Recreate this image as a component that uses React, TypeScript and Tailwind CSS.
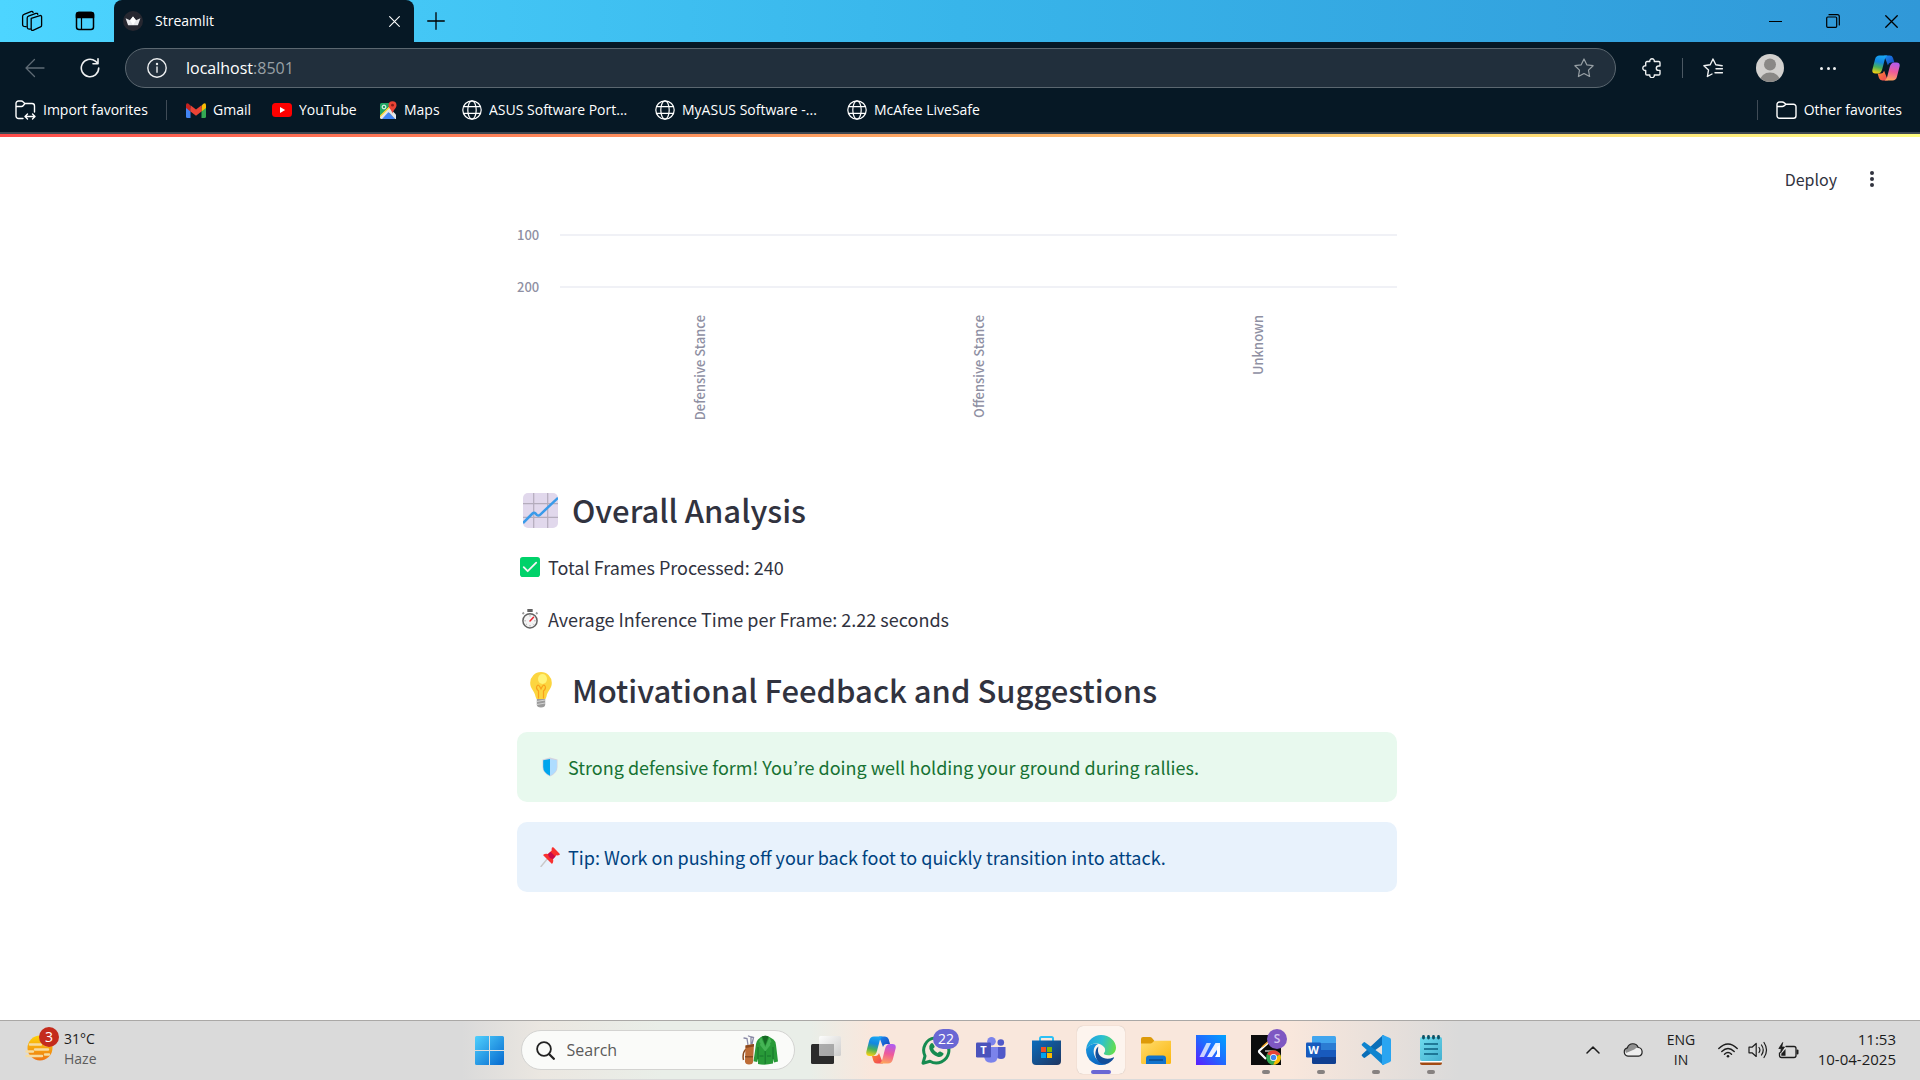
import type { ReactNode } from "react";

type IconProps = { className?: string };

const UI = "font-['Open_Sans',sans-serif]";

/* ---------- Browser chrome icons ---------- */

const line = { fill: "none", stroke: "currentColor", strokeLinecap: "round", strokeLinejoin: "round" } as const;

function WorkspacesIcon() {
  return (
    <svg viewBox="0 0 22 22" className="size-[22px]" {...line} strokeWidth="1.300">
      <path d="M10.2 8.400 19 5.600q1.600-.4 1.600 1.200v8.400q0 1.200-1.100 1.700L12 20.300q-1.800.6-1.800-1.200z" />
      <path d="M9.300 19Q6.200 19.500 6.200 17V8q0-1.400 1.300-1.900L14.800 3.400q1.800-.5 2 1" />
      <path d="M5.200 16.600Q1.600 17 1.600 14.500V6.200Q1.600 4.800 3 4.300L9.900 1.600q1.700-.5 2.200.8" />
    </svg>
  );
}

function TabActionsIcon() {
  return (
    <svg viewBox="0 0 20 20" className="size-5" {...line} strokeWidth="1.500">
      <rect x="1.500" y="1.500" width="17" height="17" rx="2.500" />
      <path d="M1.500 3.500q0-2 2-2h13q2 0 2 2v3h-17z" fill="currentColor" />
      <path d="M6.500 6v12" strokeWidth="1.200" />
    </svg>
  );
}

function CrownIcon() {
  return (
    <svg viewBox="0 0 20 20" className="size-5">
      <circle cx="10" cy="10" r="10" fill="#262730" />
      <path d="M2.600 7.200 7 9.300 10 5.500l3 3.800 4.400-2.100-2.300 6.600q-.2.500-.8.500H5.700q-.6 0-.8-.5z" fill="#e9e9ec" />
      <path d="M10 5.500 13 9.300 10 14.300 7 9.300z" fill="#fff" />
    </svg>
  );
}

function CloseIcon({ className = "size-3" }: IconProps) {
  return (
    <svg viewBox="0 0 12 12" className={className} {...line} strokeWidth="1.200">
      <path d="M.7.7l10.600 10.600M11.300.7.7 11.300" />
    </svg>
  );
}

function PlusIcon() {
  return (
    <svg viewBox="0 0 18 18" className="size-[18px]" {...line} strokeWidth="1.300">
      <path d="M9 .7v16.600M.7 9h16.600" />
    </svg>
  );
}

function BackIcon() {
  return (
    <svg viewBox="0 0 20 20" className="size-5" {...line} strokeWidth="1.300">
      <path d="M19 10H1.200M9.500 1.500 1 10l8.500 8.500" />
    </svg>
  );
}

function RefreshIcon() {
  return (
    <svg viewBox="0 0 20 20" className="size-5" {...line} strokeWidth="1.600">
      <path d="M18.700 10A8.700 8.700 0 1 1 15.400 3.200L18 5.500M18 .8v4.900h-5" />
    </svg>
  );
}

function InfoIcon() {
  return (
    <svg viewBox="0 0 20 20" className="size-5" {...line} strokeWidth="1.400">
      <circle cx="10" cy="10" r="9.200" />
      <path d="M10 9v5.200" />
      <circle cx="10" cy="6" r=".5" fill="currentColor" />
    </svg>
  );
}

function StarIcon() {
  return (
    <svg viewBox="0 0 20 20" className="size-5" {...line} strokeWidth="1.200">
      <path d="M10 1l2.800 5.800 6.300.9-4.600 4.400 1.100 6.400L10 15.500l-5.600 3 1.100-6.400L.9 7.700l6.300-.9z" />
    </svg>
  );
}

function PuzzleIcon() {
  return (
    <svg viewBox="0 0 20 20" className="size-5" {...line} strokeWidth="1.400">
      <path d="M5 3.500h2.800a2.300 2.300 0 1 1 4.500 0h4.400a1.300 1.300 0 0 1 1.300 1.300V8h-1.500a2.200 2.200 0 0 0 0 4.400H18v3.300a1.300 1.300 0 0 1-1.300 1.300h-4.400a2.300 2.300 0 1 1-4.500 0H5a1.300 1.300 0 0 1-1.300-1.300v-3.200a2.400 2.400 0 1 1 0-4.700v-3A1.300 1.300 0 0 1 5 3.500z" />
    </svg>
  );
}

function FavoritesIcon() {
  return (
    <svg viewBox="0 0 20 20" className="size-5" {...line} strokeWidth="1.400">
      <path d="M19.200 7.700l-6.400-.9L10 1 7.200 6.800.9 7.700l4.600 4.400-1.100 6.400L9 16M13 10.800h6.500M12 14.800h7.500" />
    </svg>
  );
}

function AvatarIcon() {
  return (
    <svg viewBox="0 0 28 28" className="size-7">
      <defs>
        <clipPath id="avatar-clip">
          <circle cx="14" cy="14" r="14" />
        </clipPath>
      </defs>
      <g clipPath="url(#avatar-clip)">
        <rect width="28" height="28" fill="#d2d0ce" />
        <circle cx="14" cy="10.500" r="6" fill="#8a8886" />
        <ellipse cx="14" cy="27" rx="10" ry="8.500" fill="#8a8886" />
      </g>
    </svg>
  );
}

function CopilotIcon({ className }: IconProps) {
  return (
    <svg viewBox="0 0 30 28" className={className}>
      <defs>
        <linearGradient id="cp-a" x1=".5" y1="0" x2=".3" y2="1">
          <stop offset="0" stopColor="#18a5f3" />
          <stop offset=".35" stopColor="#1387e0" />
          <stop offset=".65" stopColor="#48b05c" />
          <stop offset="1" stopColor="#f8d110" />
        </linearGradient>
        <linearGradient id="cp-b" x1=".6" y1="0" x2=".4" y2="1">
          <stop offset="0" stopColor="#b05cf0" />
          <stop offset=".5" stopColor="#ef5a9a" />
          <stop offset="1" stopColor="#fda45c" />
        </linearGradient>
        <linearGradient id="cp-c" x1="0" y1="0" x2="1" y2="1">
          <stop offset="0" stopColor="#1b8df2" />
          <stop offset="1" stopColor="#1440b8" />
        </linearGradient>
        <linearGradient id="cp-d" x1="0" y1="0" x2="1" y2="1">
          <stop offset="0" stopColor="#ff8a2e" />
          <stop offset="1" stopColor="#ee3f5c" />
        </linearGradient>
      </defs>
      <path d="M13 .5h6q2.700 0 3.600 2.600L24 8h-3.500q-2.500 0-3.500 3z" fill="url(#cp-c)" />
      <path d="M17 27.500h-6q-2.700 0-3.600-2.600L6 20h3.500q2.500 0 3.500-3z" fill="url(#cp-d)" />
      <path d="M8 .5h8.500q-2 1-2.800 4L11 15q-1.200 5-5 5H3.500Q-.5 20 .4 15.500l2.800-11Q4.300.5 8 .5z" fill="url(#cp-a)" />
      <path d="M22 27.500h-8.500q2-1 2.800-4L19 13q1.200-5 5-5h2.500q4 0 3.100 4.500l-2.800 11q-1.100 4-4.800 4z" fill="url(#cp-b)" />
    </svg>
  );
}

function ImportFolderIcon() {
  return (
    <svg viewBox="0 0 21 21" className="size-[21px]" {...line} strokeWidth="1.400">
      <path d="M8 18.500H3.500A2.500 2.500 0 0 1 1 16V3.500A2.500 2.500 0 0 1 3.500 1h2.800q1 0 1.700.8L9.800 3.500H17A2.500 2.500 0 0 1 19.500 6v6M1.500 6.500h5q1 0 1.600-.7l1.700-2" />
      <path d="M10.500 16.500h9M12.500 14l-2.500 2.500 2.500 2.500M17.500 14l2.500 2.500-2.500 2.500" />
    </svg>
  );
}

function FolderIcon() {
  return (
    <svg viewBox="0 0 21 18" className="h-[18px] w-[21px]" {...line} strokeWidth="1.400">
      <path d="M1 3.500A2.500 2.500 0 0 1 3.500 1h2.800q1 0 1.700.6l2 1.600h7.500A2.500 2.500 0 0 1 20 5.700v9a2.500 2.500 0 0 1-2.500 2.500h-14A2.500 2.500 0 0 1 1 14.700zM1.200 5.500h5.100q1 0 1.700-.6L10 3.300" />
    </svg>
  );
}

function GmailIcon() {
  return (
    <svg viewBox="0 0 20 15" className="h-[15px] w-5">
      <path d="M0 2v11.500Q0 15 1.400 15h3.100V5.300z" fill="#4285f4" />
      <path d="M20 2v11.500q0 1.500-1.400 1.500h-3.100V5.300z" fill="#34a853" />
      <path d="M0 2.200V5l4.500 3.500V3L3 1Q0-.8 0 2.200z" fill="#c5221f" />
      <path d="M20 2.200V5l-4.500 3.500V3L17 1q3-1.800 3 1.200z" fill="#fbbc04" />
      <path d="M4.500 2.300 10 6.500l5.500-4.200v6.200L10 12.700 4.500 8.500z" fill="#ea4335" />
    </svg>
  );
}

function YouTubeIcon() {
  return (
    <svg viewBox="0 0 20 14" className="h-[14px] w-5">
      <rect width="20" height="14" rx="3.500" fill="#f00" />
      <path d="M8 4v6l5.200-3z" fill="#fff" />
    </svg>
  );
}

function MapsIcon() {
  return (
    <svg viewBox="0 0 18 19" className="h-[19px] w-[18px]">
      <path d="M1.500 2H13L1 15V3.500Q1 2 2.500 2z" fill="#1fa463" />
      <path d="M1 15 11 5l3 3L4 18H2.500Q1 18 1 16.500z" fill="#e6e6e6" />
      <path d="M3 18 9.500 11l7 7z" fill="#4285f4" />
      <path d="M9.500 11 12 8.500l5 5v4.500h-.8z" fill="#e6e6e6" />
      <path d="M1 14.500 11.500 4l1 1L1 16.500z" fill="#fdd835" />
      <circle cx="5" cy="6" r="1.900" fill="none" stroke="#fff" />
      <path d="M13.500.2a4 4 0 0 1 4 4c0 3-3.200 4.300-4 8.300-.8-4-4-5.300-4-8.300a4 4 0 0 1 4-4z" fill="#ea4335" />
      <circle cx="13.500" cy="4.200" r="1.400" fill="#8c1d18" />
    </svg>
  );
}

function GlobeIcon() {
  return (
    <svg viewBox="0 0 20 20" className="size-5" {...line} strokeWidth="1.200">
      <circle cx="10" cy="10" r="9.200" />
      <ellipse cx="10" cy="10" rx="4.200" ry="9.200" />
      <path d="M1.600 6.600h16.800M1.600 13.400h16.800" />
    </svg>
  );
}

/* ---------- Page icons ---------- */

function ChartEmoji() {
  return (
    <svg viewBox="0 0 35 35" className="size-[35px]" role="img" aria-label="Chart">
      <rect width="35" height="35" rx="5" fill="#e1d8ec" />
      <path d="M10.700 0v35M24.700 0v35M0 10.700h35M0 24.300h35" stroke="#b4acbc" strokeWidth="1.200" />
      <path d="M0 30 9.500 20.500q1.500-1.500 3 0l1.300 1.300q1.600 1.500 3.200 0L35 4.800" fill="none" stroke="#3a9bea" strokeWidth="2.500" />
    </svg>
  );
}

function BulbEmoji() {
  return (
    <svg viewBox="0 0 22 36" className="h-9 w-[22px]" role="img" aria-label="Light bulb">
      <path d="M6.800 26h8.400v6.500q0 3-4.200 3t-4.200-3z" fill="#9b9b9b" />
      <path d="M6.800 29.500l8.400-1.500M6.800 32.500l8.400-1.500" stroke="#d3d3d3" strokeWidth="1" />
      <path d="M11 0a10.800 10.800 0 0 1 10.800 11c0 5.500-4.300 8-5.300 13.500q-.4 2.500-2 2.500h-7q-1.600 0-2-2.500C4.500 19 .2 16.500.2 11A10.800 10.800 0 0 1 11 0z" fill="#fcd53f" />
      <path d="M8.500 26.500V19q-3-3-1.500-5t3 1l1 2 1-2q1.500-3 3-1t-1.500 5v7.500" fill="none" stroke="#f9a11c" strokeWidth="1.200" />
      <ellipse cx="12.500" cy="7" rx="4.500" ry="5" fill="#fff478" />
    </svg>
  );
}

function CheckEmoji() {
  return (
    <svg viewBox="0 0 20 20" className="size-5" role="img" aria-label="Done">
      <rect width="20" height="20" rx="2.800" fill="#00d26a" />
      <path d="M3.700 10.200l4 4L16.200 5.700" fill="none" stroke="#f4f4f4" strokeWidth="1.800" strokeLinecap="round" strokeLinejoin="round" />
    </svg>
  );
}

function StopwatchEmoji() {
  return (
    <svg viewBox="0 0 18 20" className="h-5 w-[18px]" role="img" aria-label="Stopwatch">
      <rect x="6.300" y="0" width="5.400" height="3" rx=".6" fill="#636363" />
      <path d="M1.500 5 3 3.500M16.500 5 15 3.500" stroke="#9b9b9b" strokeWidth="1.800" />
      <circle cx="9" cy="11.800" r="7.100" fill="#f4f4f4" stroke="#636363" strokeWidth="1.500" />
      <path d="M9 6.200v1.300M9 16v1.400M3.500 11.800h1.300M13.200 11.800h1.300M5.200 15.600l.8-.8M12.800 15.600l-.8-.8" stroke="#9b9b9b" strokeWidth=".9" />
      <path d="M9 12l3.500-3.700" stroke="#e8242f" strokeWidth="1.500" strokeLinecap="round" />
    </svg>
  );
}

function ShieldEmoji() {
  return (
    <svg viewBox="0 0 16 20" className="h-5 w-4" role="img" aria-label="Shield">
      <path d="M8 .5 15.500 2.500V10q0 6-7.500 9.500Q.5 16 .5 10V2.500z" fill="#d3d3e0" />
      <path d="M8 2 1.200 3.200V10Q1.200 15.500 8 18.800z" fill="#00a6ed" />
      <path d="M8 2l6.800 1.200V10q0 5.500-6.800 8.800z" fill="#aeddff" />
    </svg>
  );
}

function PinEmoji() {
  return (
    <svg viewBox="0 0 20 20" className="size-5" role="img" aria-label="Pushpin">
      <path d="M1 19.500 8 11" stroke="#c9c9c9" strokeWidth="1.400" strokeLinecap="round" />
      <path d="M12 .6q.8-.8 1.600 0l5.800 5.800q.8.800 0 1.600-1.500.6-3 .3L13 12q.9 2.800-1 5L3 8q2.200-1.900 5-1l3.700-3.500Q11.400 2 12 .6z" fill="#f8312f" />
      <path d="M8 7l2.500-2.300 5 4.800L13 12Q8.500 11.500 8 7z" fill="#ca0b4a" />
    </svg>
  );
}

/* ---------- Taskbar icons ---------- */

function WeatherIcon() {
  return (
    <svg viewBox="0 0 28 26" className="h-[26px] w-7">
      <defs>
        <linearGradient id="sun" x1="0" y1="0" x2="0" y2="1">
          <stop offset="0" stopColor="#fdd20a" />
          <stop offset="1" stopColor="#ee7414" />
        </linearGradient>
      </defs>
      <circle cx="15" cy="13" r="12.500" fill="url(#sun)" />
      <g fill="none" stroke="#f6dca0" strokeWidth="2.400" strokeLinecap="round">
        <path d="M5 9.500h11M10 14.500h13M1.500 16.500H8M1.500 21H17M20 10h5M20 19.500h4" />
      </g>
    </svg>
  );
}

function WindowsIcon() {
  return (
    <svg viewBox="0 0 29 29" className="size-[29px]">
      <defs>
        <linearGradient id="win" x1="0" y1="0" x2="1" y2="1">
          <stop offset="0" stopColor="#4fd0fd" />
          <stop offset="1" stopColor="#0669cf" />
        </linearGradient>
      </defs>
      <path d="M1.500 0H14v14H0V1.500Q0 0 1.500 0zM15 0h12.500Q29 0 29 1.500V14H15zM0 15h14v14H1.500Q0 29 0 27.500zM15 15h14v12.500q0 1.500-1.500 1.500H15z" fill="url(#win)" />
    </svg>
  );
}

function SearchIcon() {
  return (
    <svg viewBox="0 0 19 19" className="size-[19px]" fill="none" stroke="#222" strokeLinecap="round">
      <circle cx="8" cy="8" r="6.900" strokeWidth="1.800" />
      <path d="M13 13l4.800 4.800" strokeWidth="2.300" />
    </svg>
  );
}

function JacketIcon() {
  return (
    <svg viewBox="0 0 36 30" className="h-[30px] w-9">
      <path d="M6 10 5 3.500 2 3M9 9V2L6.500 1M10 9l1.500-6.500L9.500 2" fill="none" stroke="#8a8aa6" strokeWidth="1.300" strokeLinecap="round" />
      <path d="M4 14q-4 4-2.500 11" fill="none" stroke="#8b4a20" strokeWidth="1.500" />
      <path d="M3.500 10.500 12 9l-1 18q-.2 2.500-4 2.500t-4-3z" fill="#bd6c36" />
      <path d="M3.500 10.500 12 9v2.500l-8.300 1.500zM3 21h8v1.500H3z" fill="#8b4a20" />
      <path d="M19 2q4-2.500 8.500 0l4 2.500Q33.500 6 34 10l2 16.500-4 1L31 24v4.500q-8 2-15 .5v-5l-.8 3-3.700-.8L14 9q.5-3 2-4.500z" fill="#289a38" />
      <path d="M20 1.500l3.300 9L26.500 1.500q-3-1.500-6.500 0z" fill="#156924" />
      <path d="M19 2l-2 5 1.500 1-.5 2 5.200 6.500L28.500 10l-.5-2 1.500-1-2-5-4.200 10z" fill="#45b455" />
      <path d="M23.200 16v13M16 12v12M31 12v12M17.500 21h4M25 21h4" stroke="#14702a" strokeWidth=".9" />
    </svg>
  );
}

function TaskViewIcon() {
  return (
    <svg viewBox="0 0 30 28" className="h-7 w-[30px]">
      <defs>
        <linearGradient id="tv" x1="0" y1="0" x2="1" y2="1">
          <stop offset="0" stopColor="#fff" />
          <stop offset="1" stopColor="#c9c9c9" />
        </linearGradient>
      </defs>
      <rect y="8" width="23" height="20" rx="1.500" fill="#2b2b2b" />
      <rect x="8" width="22" height="20" rx="1.500" fill="url(#tv)" fillOpacity=".88" />
      <path d="M8 8h15v12H8z" fill="#9d9d9d" fillOpacity=".75" />
    </svg>
  );
}

function WhatsAppIcon() {
  return (
    <svg viewBox="0 0 30 30" className="size-[30px]">
      <path d="M2 28.200l2-7.200A12.600 12.600 0 1 1 9 26.300z" fill="none" stroke="#168b50" strokeWidth="3" strokeLinejoin="round" />
      <path d="M9.800 8.500q1.300-1.200 2.200 0l1.500 2.600q.4.900-.4 1.700l-1 1q1.500 3 4.500 4.300l1.200-1.200q.7-.7 1.500-.3l2.800 1.500q1 .7 0 2-2 2.600-5.500 1.700-6-2-8.200-7.800Q7.500 10.800 9.800 8.500z" fill="#168b50" />
    </svg>
  );
}

function TeamsIcon() {
  return (
    <svg viewBox="0 0 30 26" className="h-[26px] w-[30px]">
      <circle cx="24.800" cy="5.500" r="3.300" fill="#5059c9" />
      <circle cx="15.500" cy="4.300" r="4.300" fill="#7b83eb" />
      <path d="M20 10h9.500v7.500q0 4.500-4.500 4.500t-5-4z" fill="#5059c9" />
      <path d="M8 10h14v8q0 7.800-7 7.800T8 18z" fill="#7b83eb" />
      <rect y="5.500" width="15" height="15" rx="1.300" fill="#4b53bc" />
      <text x="7.500" y="17" textAnchor="middle" fontFamily="Open Sans, sans-serif" fontWeight="700" fontSize="11" fill="#fff">T</text>
    </svg>
  );
}

function StoreIcon() {
  return (
    <svg viewBox="0 0 29 29" className="size-[29px]">
      <defs>
        <linearGradient id="store" x1="0" y1="0" x2="1" y2="1">
          <stop offset="0" stopColor="#0b6dbd" />
          <stop offset="1" stopColor="#1f3560" />
        </linearGradient>
      </defs>
      <path d="M8 6V2.500Q8 1 9.500 1h10Q21 1 21 2.500V6" fill="none" stroke="#2cc0f5" strokeWidth="2" />
      <path d="M0 4.500h29V25q0 4-4 4H4q-4 0-4-4z" fill="url(#store)" />
      <path d="M9 11h5v5H9z" fill="#f25022" />
      <path d="M15 11h5v5h-5z" fill="#7fba00" />
      <path d="M9 17h5v5H9z" fill="#00a4ef" />
      <path d="M15 17h5v5h-5z" fill="#ffb900" />
    </svg>
  );
}

function EdgeIcon() {
  return (
    <svg viewBox="0 0 30 30" className="size-[30px]">
      <defs>
        <linearGradient id="ed-a" x1="0" y1=".3" x2="1" y2=".5">
          <stop offset="0" stopColor="#1f9fe0" />
          <stop offset=".5" stopColor="#2cc0d0" />
          <stop offset="1" stopColor="#63dd4d" />
        </linearGradient>
        <linearGradient id="ed-b" x1="0" y1="0" x2=".4" y2="1">
          <stop offset="0" stopColor="#1b9de2" />
          <stop offset="1" stopColor="#0c67c2" />
        </linearGradient>
      </defs>
      <path d="M.2 13.500C1.500 5.500 7.500 0 15 0c8.500 0 15 6.200 15 12.500 0 5-3.700 7.800-7.800 7.800-3.500 0-4.700-1.200-4.300-2 1.800-2 1.500-4.300.3-6C14.500 7 5.500 7 .2 13.500z" fill="url(#ed-a)" />
      <path d="M.1 13.700C3 9.500 8 8 12 9c-4.300 2-5.300 7-3.500 11.500C10.500 26 16 28.500 20.500 29A15 15 0 0 1 .1 13.700z" fill="url(#ed-b)" />
      <path d="M12.300 11.500C7 16 9 29 19.500 29.300 23 28.500 26 26 28 23q.4-1-.7-.6C20 26 11.500 22 12 15z" fill="#124e9a" />
    </svg>
  );
}

function ExplorerIcon() {
  return (
    <svg viewBox="0 0 30 27" className="h-[27px] w-[30px]">
      <defs>
        <linearGradient id="fold" x1="0" y1="0" x2="1" y2="1">
          <stop offset="0" stopColor="#ffdc6e" />
          <stop offset="1" stopColor="#fbb60d" />
        </linearGradient>
      </defs>
      <path d="M0 2Q0 0 2 0h7q1 0 1.800.8L13.500 4H30v8H0z" fill="#dd9a09" />
      <path d="M0 6.500h9.500q1 0 1.800-.8l1.200-1.200q.7-.7 1.700-.7H30V25.500q0 1.500-1.500 1.500h-27Q0 27 0 25.500z" fill="url(#fold)" />
      <path d="M5 21.500q0-3 3-3h14q3 0 3 3V27H5z" fill="#1173cc" />
      <path d="M8 23h14" stroke="#0a4a8c" strokeWidth="1.500" />
    </svg>
  );
}

function AsusIcon() {
  return (
    <svg viewBox="0 0 30 30" className="size-[30px]">
      <defs>
        <linearGradient id="asus" x1="0" y1="1" x2="1" y2="0">
          <stop offset="0" stopColor="#5c1cff" />
          <stop offset=".5" stopColor="#1f6bff" />
          <stop offset="1" stopColor="#00a3ff" />
        </linearGradient>
      </defs>
      <path d="M0 0h30v30H0z" fill="url(#asus)" />
      <path d="M3.500 22 10.500 8H15L8 22z" fill="#fff" fillOpacity=".75" />
      <path d="M11 22 19.500 8H24v6l-2.500 0L16 22z" fill="#fff" fillOpacity=".9" />
      <path d="M21 12l3-2v12h-5l2-3.500z" fill="#fff" />
    </svg>
  );
}

function CapChromeIcon() {
  return (
    <svg viewBox="0 0 30 30" className="size-[30px]">
      <path d="M0 0h30v30H0z" fill="#0c0c0c" />
      <path d="M18 7 8.500 15.500q-1 1 0 2L15 24" fill="none" stroke="#fff" strokeWidth="2.200" />
      <path d="M11 12l7-6" stroke="#f5a524" strokeWidth="1.500" />
      <path d="M14 16h8" stroke="#bbb" strokeWidth="1.500" />
      <circle cx="22.500" cy="22.500" r="7.300" fill="#34a853" />
      <path d="M16.200 18.800a7.300 7.300 0 0 1 12.600 0L22.500 22z" fill="#ea4335" />
      <path d="M28.900 19a7.300 7.300 0 0 1-6.600 10.800L25.700 22z" fill="#fbbc04" />
      <path d="M17 19h11.700" stroke="#ea4335" strokeWidth="2" />
      <circle cx="22.500" cy="22.500" r="3.500" fill="#fff" />
      <circle cx="22.500" cy="22.500" r="2.700" fill="#4285f4" />
    </svg>
  );
}

function WordIcon() {
  return (
    <svg viewBox="0 0 30 28" className="h-7 w-[30px]">
      <path d="M7 0h21.500Q30 0 30 1.500V7H6V1q0-1 1-1z" fill="#41a5ee" />
      <path d="M6 7h24v7H6z" fill="#2b7cd3" />
      <path d="M6 14h24v7H6z" fill="#185abd" />
      <path d="M6 21h24v5.500q0 1.500-1.500 1.500h-21Q6 28 6 26.500z" fill="#103f91" />
      <rect y="6.500" width="15" height="15" rx="1.300" fill="#185abd" />
      <text x="7.500" y="18" textAnchor="middle" fontFamily="Open Sans, sans-serif" fontWeight="700" fontSize="11" fill="#fff">W</text>
    </svg>
  );
}

function VsCodeIcon() {
  return (
    <svg viewBox="0 0 30 30" className="size-[30px]">
      <path d="M22 0 1 19.500q-.8.800 0 1.600l1.500 1.500q.8.600 1.700 0L28 5z" fill="#0a6eb8" />
      <path d="M22 30 1 10.500q-.8-.8 0-1.600l1.500-1.500q.8-.6 1.700 0L28 25z" fill="#0f84cf" />
      <path d="M22 0l7 3q1 .5 1 1.700v20.600q0 1.200-1 1.700l-7 3q-1 0-1-1.200V1.200Q21 0 22 0z" fill="#2aa5f1" />
    </svg>
  );
}

function NotepadIcon() {
  return (
    <svg viewBox="0 0 22 30" className="h-[30px] w-[22px]">
      <defs>
        <linearGradient id="note" x1="0" y1="0" x2="1" y2="1">
          <stop offset="0" stopColor="#6fdcee" />
          <stop offset="1" stopColor="#44b0d0" />
        </linearGradient>
      </defs>
      <path d="M0 26h22v2q0 2-2 2H2q-2 0-2-2z" fill="#a24a12" />
      <path d="M0 26h22v1.500H0z" fill="#fff" />
      <rect y="2" width="22" height="24" rx="2" fill="url(#note)" />
      <path d="M4 9h14M4 14h14M4 19h14" stroke="#0c5f80" strokeWidth="1.700" />
      <path d="M3.500 1.500v1.500M8.500 1.500v1.500M13.500 1.500v1.500M18.500 1.500v1.500" stroke="#0c5266" strokeWidth="2.800" strokeLinecap="round" />
    </svg>
  );
}

function ChevronUpIcon() {
  return (
    <svg viewBox="0 0 14 8" className="h-2 w-3.5" {...line} strokeWidth="1.500">
      <path d="M1 7l6-6 6 6" />
    </svg>
  );
}

function CloudIcon() {
  return (
    <svg viewBox="0 0 20 14" className="h-3.5 w-5">
      <path d="M5 13.200a4.300 4.300 0 0 1-.6-8.400 5.700 5.700 0 0 1 10.800-.3 4.400 4.400 0 0 1 .3 8.700z" fill="#eee" />
      <path d="M4.400 4.800a5.700 5.700 0 0 1 10.800-.3q-2 .2-4 2L3 10Q1 6 4.400 4.800z" fill="#909090" />
      <path d="M5 13.200a4.300 4.300 0 0 1-.6-8.400 5.700 5.700 0 0 1 10.800-.3 4.400 4.400 0 0 1 .3 8.700z" fill="none" stroke="#222" strokeWidth="1.200" />
    </svg>
  );
}

function WifiIcon() {
  return (
    <svg viewBox="0 0 20 15" className="h-[15px] w-5" {...line} strokeWidth="1.400">
      <path d="M.8 5.500q9.200-9.200 18.400 0M3.800 8.500q6.200-6 12.400 0M6.500 11.200q3.500-3.300 7 0" />
      <circle cx="10" cy="13.200" r="1.300" fill="currentColor" stroke="none" />
    </svg>
  );
}

function VolumeIcon() {
  return (
    <svg viewBox="0 0 20 18" className="h-[18px] w-5" {...line} strokeWidth="1.200">
      <path d="M1 6.200h3L8.200 2.500v13L4 11.800H1zM11 6.500q1.800 2.500 0 5M13.500 4q3.500 5 0 10M16 1.500q5 7.500 0 15" />
    </svg>
  );
}

function BatteryIcon() {
  return (
    <svg viewBox="0 0 21 17" className="h-[17px] w-[21px]" {...line} strokeWidth="1.300">
      <path d="M8 4.500h8q2 0 2 2v7q0 2-2 2H3.500q-2 0-2-2V11" />
      <path d="M19.500 8.500v3" strokeWidth="2" />
      <path d="M4.500.8.800 6.500h2.500L2.500 11l4-6H4z" fill="currentColor" strokeWidth=".8" />
      <path d="M3.300 13.700v-2L7.500 7v6.700z" fill="currentColor" stroke="none" />
    </svg>
  );
}

/* ---------- Browser ---------- */

function TabStrip() {
  return (
    <div className="flex h-[42px] items-stretch bg-linear-to-r from-[#4dd5ff] via-[#38b5ea] to-[#3098d8] text-black">
      <button className="flex w-16 items-center justify-center" aria-label="Workspaces">
        <WorkspacesIcon />
      </button>
      <button className="flex w-[50px] items-center pl-[11px]" aria-label="Tab actions">
        <TabActionsIcon />
      </button>
      <div className="flex w-[300px] items-center rounded-t-lg bg-[#061825] pr-3 pl-[9px] text-white">
        <CrownIcon />
        <span className="ml-3 grow text-sm">Streamlit</span>
        <button aria-label="Close tab" className="p-0.5">
          <CloseIcon className="size-[11px]" />
        </button>
      </div>
      <button className="flex w-[43px] items-center justify-center" aria-label="New tab">
        <PlusIcon />
      </button>
      <div className="ml-auto flex">
        <button className="flex w-[58px] items-center justify-center" aria-label="Minimize">
          <span className="h-px w-[13px] bg-black" />
        </button>
        <button className="flex w-[58px] items-center justify-center" aria-label="Restore">
          <svg viewBox="0 0 14 14" className="size-3.5" {...line} strokeWidth="1.200">
            <rect x=".7" y="3" width="10" height="10.300" rx="1" />
            <path d="M3 .7h8.300q2 0 2 2V11" />
          </svg>
        </button>
        <button className="flex w-[58px] items-center justify-center" aria-label="Close window">
          <CloseIcon className="size-[13px]" />
        </button>
      </div>
    </div>
  );
}

function Toolbar() {
  return (
    <div className="flex h-[52px] items-center text-[#eef0f1]">
      <button className="flex w-[70px] items-center justify-center text-[#5f6b75]" aria-label="Back">
        <BackIcon />
      </button>
      <button className="flex w-10 items-center justify-center" aria-label="Refresh">
        <RefreshIcon />
      </button>
      <div className="ml-[15px] flex h-10 grow items-center rounded-full border border-[#5b6770] bg-[#212f3c] px-[21px]">
        <InfoIcon />
        <div className="ml-[19px] grow text-base text-white">
          localhost<span className="text-[#98a0a5]">:8501</span>
        </div>
        <button className="text-[#98a0a5]" aria-label="Add to favorites">
          <StarIcon />
        </button>
      </div>
      <button className="ml-[26px]" aria-label="Extensions">
        <PuzzleIcon />
      </button>
      <span className="ml-5 h-5 w-px bg-[#4b5863]" />
      <button className="ml-5" aria-label="Favorites">
        <FavoritesIcon />
      </button>
      <button className="ml-[33px]" aria-label="Profile">
        <AvatarIcon />
      </button>
      <button className="ml-9 flex w-4 justify-between" aria-label="Settings and more">
        <span className="size-[3px] rounded-full bg-current" />
        <span className="size-[3px] rounded-full bg-current" />
        <span className="size-[3px] rounded-full bg-current" />
      </button>
      <button className="mr-5 ml-9" aria-label="Copilot">
        <CopilotIcon className="h-[26px] w-7" />
      </button>
    </div>
  );
}

function Bookmark({ icon, label, className = "" }: { icon: ReactNode; label: string; className?: string }) {
  return (
    <a href="#" className={`flex items-center gap-[7px] whitespace-nowrap ${className}`}>
      {icon}
      <span className="overflow-hidden text-ellipsis">{label}</span>
    </a>
  );
}

function BookmarksBar() {
  return (
    <nav className="flex h-[38px] items-center pb-1.5 pr-[18px] pl-[15px] text-sm text-white">
      <Bookmark icon={<ImportFolderIcon />} label="Import favorites" className="w-[135px]" />
      <span className="ml-4 h-5 w-px bg-[#3f4b56]" />
      <Bookmark icon={<GmailIcon />} label="Gmail" className="ml-[19px] w-[86px]" />
      <Bookmark icon={<YouTubeIcon />} label="YouTube" className="w-[107px]" />
      <Bookmark icon={<MapsIcon />} label="Maps" className="w-[83px]" />
      <Bookmark icon={<GlobeIcon />} label="ASUS Software Port..." className="w-[193px]" />
      <Bookmark icon={<GlobeIcon />} label="MyASUS Software -..." className="w-[192px]" />
      <Bookmark icon={<GlobeIcon />} label="McAfee LiveSafe" />
      <span className="ml-auto h-5 w-px bg-[#3f4b56]" />
      <Bookmark icon={<FolderIcon />} label="Other favorites" className="ml-[18px]" />
    </nav>
  );
}

/* ---------- Streamlit page ---------- */

function Chart() {
  return (
    <section aria-label="Stance chart" className="text-[13px] font-medium text-[#8f90a3]">
      <div className="flex flex-col gap-6">
        {["100", "200"].map((tick) => (
          <div key={tick} className="flex items-center leading-7">
            <span className="w-[43px]">{tick}</span>
            <span className="h-0.5 grow bg-[#f0f1f6]" />
          </div>
        ))}
      </div>
      <div className="mt-3.5 ml-[43px] grid grid-cols-3 items-start justify-items-center">
        {["Defensive Stance", "Offensive Stance", "Unknown"].map((name) => (
          <span key={name} className="rotate-180 leading-5 [writing-mode:vertical-rl]">
            {name}
          </span>
        ))}
      </div>
    </section>
  );
}

function Heading({ icon, children }: { icon: ReactNode; children: ReactNode }) {
  return (
    <h2 className="flex h-11 items-center text-[31px] font-medium">
      <span className="flex w-[55px] pl-1.5">
        <span className="flex w-[35px] justify-center">{icon}</span>
      </span>
      {children}
    </h2>
  );
}

function Fact({ icon, children }: { icon: ReactNode; children: ReactNode }) {
  return (
    <p className="flex items-center text-lg leading-[30px]">
      <span className="mr-2 ml-[3px] flex w-5 justify-center">{icon}</span>
      {children}
    </p>
  );
}

function Alert({ icon, className, children }: { icon: ReactNode; className: string; children: ReactNode }) {
  return (
    <div role="alert" className={`flex items-center rounded-[10px] px-[23px] py-5 text-lg leading-[30px] ${className}`}>
      <span className="mr-2 flex w-5 justify-center">{icon}</span>
      {children}
    </div>
  );
}

function Page() {
  return (
    <main className="grow bg-white font-['Noto_Sans_CJK_JP','Noto_Sans',sans-serif] text-[#31333f]">
      <div className="h-[3px] bg-linear-to-r from-[#ff4b4b] to-[#fffd80]" />
      <div className="flex h-[84px] items-center justify-end pr-10">
        <button className="text-base">Deploy</button>
        <button className="ml-[27px] flex w-4 flex-col items-center gap-0.5" aria-label="Main menu">
          <span className="size-1 rounded-full bg-current" />
          <span className="size-1 rounded-full bg-current" />
          <span className="size-1 rounded-full bg-current" />
        </button>
      </div>
      <div className="pr-1.5">
        <div className="mx-auto max-w-[880px]">
          <Chart />
          <div className="mt-17">
            <Heading icon={<ChartEmoji />}>Overall Analysis</Heading>
          </div>
          <div className="mt-5 flex flex-col gap-[22px]">
            <Fact icon={<CheckEmoji />}>Total Frames Processed: 240</Fact>
            <Fact icon={<StopwatchEmoji />}>Average Inference Time per Frame: 2.22 seconds</Fact>
          </div>
          <div className="mt-[34px]">
            <Heading icon={<BulbEmoji />}>Motivational Feedback and Suggestions</Heading>
          </div>
          <div className="mt-5 flex flex-col gap-5">
            <Alert icon={<ShieldEmoji />} className="bg-[#e8f9ee] text-[#177233]">
              Strong defensive form! You’re doing well holding your ground during rallies.
            </Alert>
            <Alert icon={<PinEmoji />} className="bg-[#e8f2fc] text-[#004280]">
              Tip: Work on pushing off your back foot to quickly transition into attack.
            </Alert>
          </div>
        </div>
      </div>
    </main>
  );
}

/* ---------- Taskbar ---------- */

type TaskbarApp = { name: string; icon: ReactNode; badge?: ReactNode; active?: boolean; running?: boolean };

const apps: TaskbarApp[] = [
  { name: "Task view", icon: <TaskViewIcon /> },
  { name: "Copilot", icon: <CopilotIcon className="h-7 w-[30px]" /> },
  {
    name: "WhatsApp",
    icon: <WhatsAppIcon />,
    badge: <span className="absolute -top-1.5 left-3 flex h-5 w-[26px] items-center justify-center rounded-full bg-[#6a67d4] text-sm text-white">22</span>,
  },
  { name: "Teams", icon: <TeamsIcon /> },
  { name: "Microsoft Store", icon: <StoreIcon /> },
  { name: "Edge", icon: <EdgeIcon />, active: true },
  { name: "File Explorer", icon: <ExplorerIcon /> },
  { name: "MyASUS", icon: <AsusIcon /> },
  {
    name: "Chrome",
    icon: <CapChromeIcon />,
    running: true,
    badge: <span className="absolute -top-1.5 left-4 flex size-5 items-center justify-center rounded-full bg-[#7e57c2] text-xs font-semibold text-[#d4c3ef]">S</span>,
  },
  { name: "Word", icon: <WordIcon />, running: true },
  { name: "Visual Studio Code", icon: <VsCodeIcon />, running: true },
  { name: "Notepad", icon: <NotepadIcon />, running: true },
];

function AppButton({ app }: { app: TaskbarApp }) {
  return (
    <button className="flex w-[55px] items-center justify-center" aria-label={app.name}>
      <span className={`relative flex size-12 items-center justify-center rounded-md ${app.active ? "bg-[#fdf4ee] shadow-[0_0_1px_#0004]" : ""}`}>
        <span className="relative flex">
          {app.icon}
          {app.badge}
        </span>
        {app.active && <span className="absolute bottom-0 h-1 w-5 rounded-full bg-[#6a67d4]" />}
        {app.running && <span className="absolute bottom-0 h-1 w-2 rounded-full bg-[#868180]" />}
      </span>
    </button>
  );
}

function Taskbar() {
  return (
    <footer className="grid h-[60px] grid-cols-[1fr_auto_1fr] items-stretch border-t border-[#aaa8a6] bg-[#dadada] pb-px text-sm text-[#1c1c1c]">
      <button className="flex items-center pl-[25px] text-left leading-5">
        <span className="relative mr-[11px] pb-1">
          <WeatherIcon />
          <span className="absolute -top-2 left-3.5 flex size-5 items-center justify-center rounded-full bg-[#c42b1c] text-sm text-white">3</span>
        </span>
        <span className="pb-0.5">
          31°C
          <span className="block text-[#5c5c5c]">Haze</span>
        </span>
      </button>
      <div className="flex bg-[linear-gradient(90deg,#dadada_0%,#ebe7e1_8%,#e9eee8_20%,#e9eee8_35%,#f9e7dc_41%,#f9e7dc_83%,#dadada_100%)]">
        <button className="flex w-[55px] items-center justify-center" aria-label="Start">
          <WindowsIcon />
        </button>
        <label className="mx-1 flex h-10 w-[274px] items-center self-center rounded-full border border-[#d3d3d1] bg-[#fafbf9] pr-4 pl-[14px]">
          <SearchIcon />
          <input
            type="search"
            placeholder="Search"
            aria-label="Search"
            className="ml-3 w-0 grow bg-transparent text-base outline-none placeholder:text-[#5a5a5a]"
          />
          <JacketIcon />
        </label>
        {apps.map((app) => (
          <AppButton key={app.name} app={app} />
        ))}
      </div>
      <div className="flex items-center justify-end pr-6 leading-5">
        <button aria-label="Show hidden icons">
          <ChevronUpIcon />
        </button>
        <button className="ml-[23px]" aria-label="OneDrive">
          <CloudIcon />
        </button>
        <button className="ml-[23px] w-[30px] text-center">
          ENG
          <br />
          IN
        </button>
        <button className="ml-[22px] flex items-center gap-2.5" aria-label="Network, volume and battery">
          <WifiIcon />
          <VolumeIcon />
          <BatteryIcon />
        </button>
        <button className="w-[97px] pb-0.5 text-right text-[15px] whitespace-nowrap">
          11:53
          <br />
          10-04-2025
        </button>
      </div>
    </footer>
  );
}

export default function App() {
  return (
    <div className={`flex min-h-screen flex-col ${UI}`}>
      <header className="border-b-2 border-[#3f4852] bg-[#061825]">
        <TabStrip />
        <Toolbar />
        <BookmarksBar />
      </header>
      <Page />
      <Taskbar />
    </div>
  );
}
